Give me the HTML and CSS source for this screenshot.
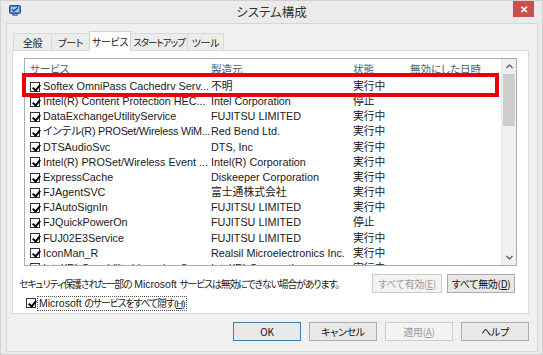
FILE: index.html
```html
<!DOCTYPE html>
<html lang="ja">
<head>
<meta charset="utf-8">
<title>システム構成</title>
<link rel="stylesheet" href="styles.css">
</head>
<body>
<div class="window">
  <div class="titlebar">
    <div class="tb-left">
      <svg class="app-icon" width="12" height="11" viewBox="0 0 12 11">
        <rect x="0.5" y="0.5" width="11" height="8" rx="1" fill="#5a7fc4" stroke="#2f4f8f"/>
        <rect x="2" y="2" width="8" height="5" fill="#9fc3f0"/>
        <path d="M3 4.5 L5 6 L9 2.5" stroke="#1d3f80" stroke-width="1.2" fill="none"/>
        <rect x="3" y="9" width="6" height="2" fill="#6f8fc9"/>
      </svg>
    </div>
    <div class="title">システム構成</div>
    <div class="tb-right"><div class="close">✕</div></div>
  </div>
  <div class="client">
    <div class="tabs">
      <div class="tab t1">全般</div>
      <div class="tab t2">ブート</div>
      <div class="tab t3 active">サービス</div>
      <div class="tab t4">スタートアップ</div>
      <div class="tab t5">ツール</div>
    </div>
    <div class="panel">
      <div class="list">
        <div class="list-body">
          <div class="row header">
            <span class="h-svc">サービス</span>
            <span>製造元</span>
            <span>状態</span>
            <span>無効にした日時</span>
          </div>
          <div class="row"><span class="cb"></span><span>Softex OmniPass Cachedrv Serv...</span><span>不明</span><span>実行中</span></div>
          <div class="row"><span class="cb"></span><span>Intel(R) Content Protection HEC...</span><span>Intel Corporation</span><span>停止</span></div>
          <div class="row"><span class="cb"></span><span>DataExchangeUtilityService</span><span>FUJITSU LIMITED</span><span>実行中</span></div>
          <div class="row"><span class="cb"></span><span class="tight">インテル(R) PROSet/Wireless WiM...</span><span>Red Bend Ltd.</span><span>実行中</span></div>
          <div class="row"><span class="cb"></span><span>DTSAudioSvc</span><span>DTS, Inc</span><span>実行中</span></div>
          <div class="row"><span class="cb"></span><span>Intel(R) PROSet/Wireless Event ...</span><span>Intel(R) Corporation</span><span>実行中</span></div>
          <div class="row"><span class="cb"></span><span>ExpressCache</span><span>Diskeeper Corporation</span><span>実行中</span></div>
          <div class="row"><span class="cb"></span><span>FJAgentSVC</span><span>富士通株式会社</span><span>実行中</span></div>
          <div class="row"><span class="cb"></span><span>FJAutoSignIn</span><span>FUJITSU LIMITED</span><span>実行中</span></div>
          <div class="row"><span class="cb"></span><span>FJQuickPowerOn</span><span>FUJITSU LIMITED</span><span>停止</span></div>
          <div class="row"><span class="cb"></span><span>FUJ02E3Service</span><span>FUJITSU LIMITED</span><span>実行中</span></div>
          <div class="row"><span class="cb"></span><span>IconMan_R</span><span>Realsil Microelectronics Inc.</span><span>実行中</span></div>
          <div class="row"><span class="cb"></span><span>Intel(R) Capability Licensing S...</span><span>Intel(R) Corporation</span><span>実行中</span></div>
        </div>
        <div class="scrollbar">
          <div class="sb-btn">
            <svg width="7" height="5" viewBox="0 0 7 5"><path d="M0.5 4 L3.5 1 L6.5 4" stroke="#606060" stroke-width="1.4" fill="none"/></svg>
          </div>
          <div class="sb-thumb"></div>
          <div class="sb-track"></div>
          <div class="sb-btn">
            <svg width="7" height="5" viewBox="0 0 7 5"><path d="M0.5 1 L3.5 4 L6.5 1" stroke="#606060" stroke-width="1.4" fill="none"/></svg>
          </div>
        </div>
        <div class="highlight"></div>
      </div>
      <div class="hint-row">
        <span class="hint">セキュリティ保護された一部の <span class="lat">Microsoft</span> サービスは無効にできない場合があります。</span>
        <button class="btn small" disabled>すべて有効(<u>E</u>)</button>
        <button class="btn small last">すべて無効(<u>D</u>)</button>
      </div>
      <div class="hide-row">
        <span class="cb"></span><span class="focus"><span class="lat">Microsoft</span> のサービスをすべて隠す(<u>H</u>)</span>
      </div>
    </div>
    <div class="footer">
      <button class="btn default">OK</button>
      <button class="btn">キャンセル</button>
      <button class="btn" disabled>適用(<u>A</u>)</button>
      <button class="btn">ヘルプ</button>
    </div>
  </div>
</div>
</body>
</html>
```

FILE: styles.css
```css
* { box-sizing: border-box; }
html, body { margin: 0; padding: 0; }
body {
  width: 543px; height: 355px; overflow: hidden;
  font-family: "Liberation Sans", "Noto Sans CJK JP", sans-serif;
  font-size: 10.8px;
  font-feature-settings: "palt" 1;
  color: #1a1a1a;
  background: #ebebeb;
}
.window {
  width: 543px; height: 355px;
  background: #ebebeb;
  border: 1px solid #d2d2d2;
  display: flex; flex-direction: column;
}
.titlebar {
  height: 22px;
  display: grid;
  grid-template-columns: 1fr auto 1fr;
  align-items: center;
}
.tb-left { display: flex; align-items: center; padding-left: 8px; padding-bottom: 3px; }
.title {
  font-family: "Noto Sans CJK JP", sans-serif;
  font-size: 12.5px; color: #333; padding-bottom: 1px;
}
.tb-right { display: flex; justify-content: flex-end; align-self: start; padding-right: 8px; }
.close {
  width: 21px; height: 16px;
  background: #c9504d;
  color: #fff; font-size: 10px; font-weight: bold;
  display: flex; align-items: center; justify-content: center;
}
.client {
  margin-left: 5px;
  width: 532px; height: 329px;
  background: #f0f0f0;
  border: 1px solid #d6d6d6;
  padding: 7px 8px 0 5px;
  display: flex; flex-direction: column;
}
.tabs { display: flex; height: 19px; padding-left: 1px; align-items: flex-end; position: relative; z-index: 1; }
.tab {
  height: 17px;
  border: 1px solid #d9d9d9; border-bottom: none;
  background: #ececec;
  font-family: "Noto Sans CJK JP", sans-serif;
  font-size: 10px; color: #222;
  white-space: nowrap;
  letter-spacing: -0.3px;
  display: flex; align-items: center; justify-content: center;
  margin-right: -1px;
  overflow: hidden;
}
.t1 { width: 39px; }
.t2 { width: 39px; }
.t3 { width: 42px; }
.t4 { width: 58px; letter-spacing: -1.1px; font-size: 9.6px; }
.t5 { width: 37px; }
.tab.active { height: 20px; background: #fff; margin-bottom: -1px; position: relative; border-color: #d0d0d0; }
.panel {
  width: 517px; height: 264px;
  background: #fff;
  border: 1px solid #d9d9d9;
  padding: 7px 0 0 5px;
  display: flex; flex-direction: column;
}
.list {
  margin-left: 6px;
  width: 493px; height: 208px;
  border: 1px solid #abadb3;
  display: flex;
  position: relative;
  overflow: visible;
}
.list-body { flex: 1; overflow: hidden; }
.row {
  display: grid;
  grid-template-columns: 18px 168px 142px 57px 1fr;
  height: 15.17px; line-height: 15.17px;
  white-space: nowrap;
  align-items: center;
}
.row > span:nth-child(2), .row > span:nth-child(3) { overflow: hidden; padding-right: 3px; }
.tight { letter-spacing: -0.25px; }
.row.header {
  grid-template-columns: 181px 142px 57px 1fr;
  height: 20px; line-height: 20px; padding-left: 5px;
  color: #4c5d73;
  font-family: "Noto Sans CJK JP", sans-serif;
  font-size: 10.5px;
}
.row .cb { margin-left: 5px; }
.cb {
  width: 10px; height: 10px;
  border: 1px solid #333;
  background: #fff;
  display: inline-block; position: relative;
}
.cb::after {
  content: "";
  position: absolute; left: 2.5px; top: 0px;
  width: 3px; height: 6px;
  border: solid #000; border-width: 0 2px 2px 0;
  transform: rotate(40deg);
}
.scrollbar {
  width: 15px;
  background: #f0f0f0;
  border-left: 1px solid #e6e6e6;
  display: flex; flex-direction: column;
}
.sb-btn {
  height: 15px; flex: none;
  display: flex; align-items: center; justify-content: center;
}
.sb-thumb { height: 52px; margin: 0 1px 0 1px; background: #cdcdcd; flex: none; }
.sb-track { flex: 1; }
.highlight {
  position: absolute;
  left: -3px; top: 14px;
  width: 477px; height: 24px;
  border: 4px solid #e8000b;
  pointer-events: none;
}
.hint-row {
  display: flex; align-items: center;
  margin-top: 8px; height: 19px;
}
.hint {
  font-size: 9.8px;
  letter-spacing: -1.05px;
  word-spacing: 1px;
  flex: 1; white-space: nowrap; padding-left: 1px;
}
.lat { letter-spacing: 0; font-size: 10.5px; }
.btn {
  font-family: "Noto Sans CJK JP", sans-serif;
  font-size: 10px;
  font-feature-settings: "palt" 1;
  letter-spacing: -0.3px;
  white-space: nowrap;
  height: 19px; width: 68px; padding: 0;
  border: 1px solid #acacac;
  background: #e8e8e8;
  color: #111;
  display: flex; align-items: center; justify-content: center;
  flex: none;
}
.btn[disabled] { color: #9a9a9a; background: #f3f3f3; border-color: #cdcdcd; }
.btn.default { border-color: #3c7fb1; }
.btn.small { width: 70px; margin-left: 5px; }
.btn.small.last { width: 68px; margin-right: 13px; }
.hide-row {
  display: flex; align-items: center;
  margin-top: 3px; height: 14px; padding-left: 8px;
}
.hide-row .cb { margin-right: 1px; }
.focus {
  border: 1px dotted #555; padding: 0 1px; line-height: 12px;
  font-size: 9.8px; letter-spacing: -1px; word-spacing: 1px;
}
.footer {
  display: flex; justify-content: flex-end; gap: 8px;
  margin-top: 8px; padding-right: 0;
}
u { text-decoration: underline; }
```
